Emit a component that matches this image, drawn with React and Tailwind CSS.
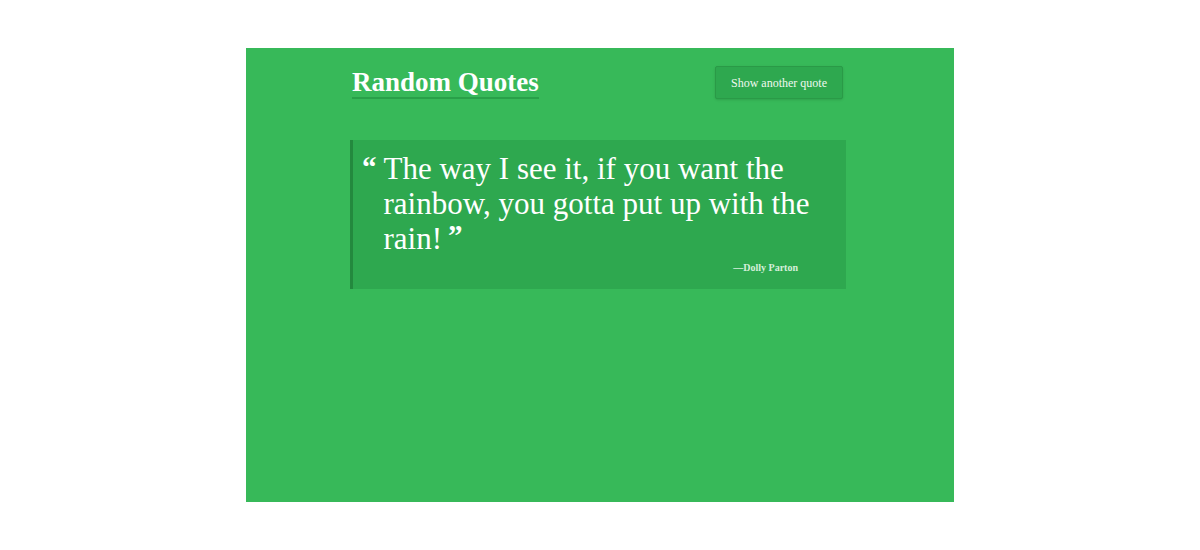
import React from "react";

export default function App() {
  const quote = {
    text: "The way I see it, if you want the rainbow, you gotta put up with the rain!",
    author: "Dolly Parton",
  };

  const words = quote.text.split(" ");
  const lastWord = words.pop();

  return (
    <div className="min-h-[550px] bg-white pt-12 font-['Liberation_Serif',serif]">
      <div className="mx-auto w-[708px] h-[454px] bg-[#37b959]">
        <div className="ml-[104px] w-[496px] pt-[18px]">
          {/* header */}
          <div className="flex items-center justify-between">
            <h1 className="ml-[2px] mt-[2px] border-b-2 border-[#29a049] pb-[1px] text-[27px] font-bold leading-[28px] text-white">
              Random Quotes
            </h1>
            <button className="mr-[3px] h-[33px] w-[128px] rounded-[2px] border border-[#2a9a47] bg-[#2ea84f] text-[12px] text-[#eef8f0] shadow-sm">
              Show another quote
            </button>
          </div>

          {/* quote */}
          <blockquote className="mt-[41px] border-l-[3px] border-[#23893e] bg-[#2ea84f] pl-[9px] pr-[10px] pt-[11px] pb-[14px] text-white">
            <div className="flex text-[31px] leading-[35px]">
              <span className="mr-[7px] mt-[-1px] text-[29px] font-bold leading-[35px]">&ldquo;</span>
              <p>
                {words.join(" ") + " "}
                <span className="whitespace-nowrap">
                  <span>{lastWord}</span>
                  <span className="ml-[6px] inline-block align-top text-[29px] font-bold leading-[28px]">&rdquo;</span>
                </span>
              </p>
            </div>
            <p className="mt-[4px] pr-[38px] text-right text-[10px] font-bold text-[#d6efdb]">
              &mdash;{quote.author}
            </p>
          </blockquote>
        </div>
      </div>
    </div>
  );
}
